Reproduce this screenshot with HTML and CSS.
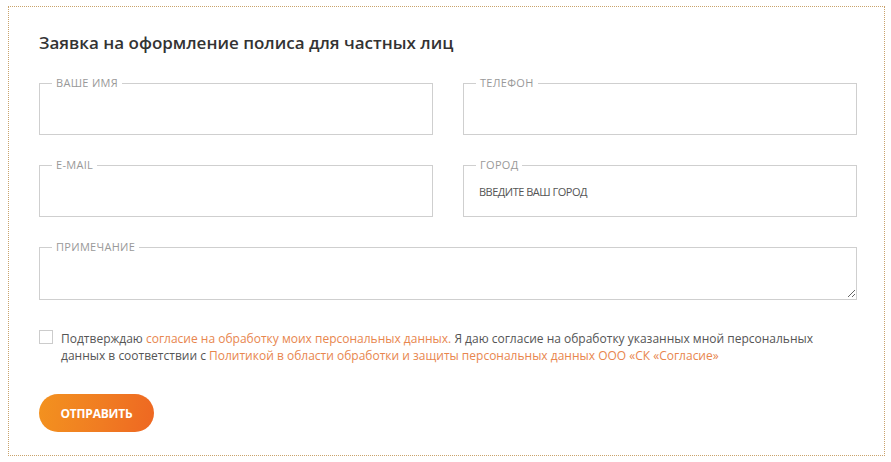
FILE: index.html
```html
<!DOCTYPE html>
<html lang="ru">
<head>
<meta charset="utf-8">
<title>Заявка на оформление полиса</title>
<link rel="stylesheet" href="styles.css">
</head>
<body>
<form class="card">
  <h2 class="title">Заявка на оформление полиса для частных лиц</h2>
  <div class="grid">
    <fieldset class="field">
      <legend class="legend">Ваше имя</legend>
      <input class="input" type="text">
    </fieldset>
    <fieldset class="field">
      <legend class="legend">Телефон</legend>
      <input class="input" type="text">
    </fieldset>
    <fieldset class="field">
      <legend class="legend">E-mail</legend>
      <input class="input" type="text">
    </fieldset>
    <fieldset class="field">
      <legend class="legend">Город</legend>
      <input class="input city" type="text" placeholder="ВВЕДИТЕ ВАШ ГОРОД">
    </fieldset>
    <fieldset class="field wide">
      <legend class="legend">Примечание</legend>
      <textarea class="textarea"></textarea>
    </fieldset>
  </div>
  <label class="agree">
    <span class="box"></span>
    <span class="agree-text">Подтверждаю <a class="link" href="#">согласие на обработку моих персональных данных.</a> Я даю согласие на обработку указанных мной персональных данных в соответствии с <a class="link" href="#">Политикой в области обработки и защиты персональных данных ООО «СК «Согласие»</a></span>
  </label>
  <button class="submit" type="button">Отправить</button>
</form>
</body>
</html>
```
FILE: styles.css
```css
html, body {
  background: #fff;
}
body {
  margin: 6px 6px 0 8px;
  font-family: "Open Sans", "Noto Sans", sans-serif;
  color: #555;
}
.card {
  border: 1px dotted #c9a36c;
  padding: 25px 27px 22px 30px;
  box-sizing: border-box;
  height: 450px;
}
.title {
  margin: 0 0 22px 0;
  font-size: 17px;
  line-height: 22px;
  font-weight: 600;
  color: #333;
}
.grid {
  display: grid;
  grid-template-columns: 394px 394px;
  column-gap: 30px;
  row-gap: 23px;
}
.field {
  margin: 0;
  padding: 0 12px 0 12px;
  border: 1px solid #cfcfcf;
  min-width: 0;
  height: 59px;
  box-sizing: border-box;
}
.wide {
  grid-column: 1 / 3;
  height: 60px;
  padding-right: 0;
}
.legend {
  padding: 0 4px;
  font-size: 11px;
  line-height: 14px;
  text-transform: uppercase;
  letter-spacing: 0.3px;
  color: #999;
}
.input {
  display: block;
  width: 100%;
  height: 38px;
  border: 0;
  padding: 0 3px;
  margin: 0;
  outline: none;
  font-family: inherit;
  font-size: 11px;
  color: #555;
  background: transparent;
  box-sizing: border-box;
}
.city::placeholder {
  color: #555;
  letter-spacing: -0.5px;
  opacity: 1;
}
.textarea {
  display: block;
  width: 100%;
  height: 44px;
  border: 0;
  margin: 0;
  padding: 0;
  outline: none;
  resize: vertical;
  font-family: inherit;
  box-sizing: border-box;
}
.agree {
  display: flex;
  gap: 8px;
  margin-top: 30px;
  font-size: 12px;
  line-height: 17px;
}
.box {
  flex: none;
  width: 12px;
  height: 12px;
  border: 1px solid #ccc;
  background: #fff;
}
.agree-text {
  color: #555;
  max-width: 790px;
}
.link {
  color: #e8864e;
  text-decoration: none;
}
.submit {
  display: block;
  margin-top: 30px;
  width: 115px;
  height: 38px;
  border: 0;
  border-radius: 19px;
  background: linear-gradient(100deg, #f3921f 0%, #f07c22 55%, #ee6722 100%);
  color: #fff;
  font-family: inherit;
  font-size: 12px;
  font-weight: 700;
  letter-spacing: -0.2px;
  text-transform: uppercase;
  padding: 0;
}
```
